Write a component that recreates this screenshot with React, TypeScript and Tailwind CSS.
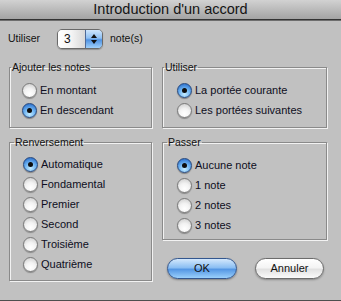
import React from "react";

function Radio({ checked }: { checked?: boolean }) {
  return (
    <span
      className={
        checked
          ? "w-[15px] h-[15px] shrink-0 rounded-full border border-[#27497e] flex items-center justify-center bg-[radial-gradient(circle_at_50%_78%,#c4ecff_0%,#6fb4f2_45%,#2f74cf_85%,#2a63b8_100%)] shadow-[0_1px_1px_rgba(0,0,0,0.35)]"
          : "w-[15px] h-[15px] shrink-0 rounded-full border border-[#7a7a7a] bg-[radial-gradient(circle_at_50%_75%,#ffffff_0%,#f2f2f2_45%,#d2d2d2_85%,#bdbdbd_100%)] shadow-[0_1px_1px_rgba(0,0,0,0.3)]"
      }
    >
      {checked && <span className="w-[5px] h-[5px] rounded-full bg-[#0d0d0d]" />}
    </span>
  );
}

function Row({ label, checked }: { label: string; checked?: boolean }) {
  return (
    <div className="h-[20px] flex items-center gap-[3px] text-[11px] text-[#0e0e22]">
      <Radio checked={checked} />
      <span>{label}</span>
    </div>
  );
}

function Group({
  title,
  children,
  className,
  inner,
  legendClass,
}: {
  title: string;
  children: React.ReactNode;
  className: string;
  inner: string;
  legendClass?: string;
}) {
  return (
    <fieldset
      className={
        "border border-[#8a8a8a] shadow-[inset_1px_1px_0_#f2f2f2,1px_1px_0_#f2f2f2] " +
        className
      }
    >
      <legend
        className={
          "px-[1px] text-[10.5px] leading-[12px] text-[#111] " + (legendClass ?? "ml-[1px]")
        }
      >
        {title}
      </legend>
      <div className={inner}>{children}</div>
    </fieldset>
  );
}

export default function App() {
  return (
    <div className="w-[341px] h-[301px] bg-[#c1c1c1] border-b border-[#4e4e4e] flex flex-col font-['Liberation_Sans',Arial,sans-serif] overflow-hidden">
      <div className="h-[19px] shrink-0 bg-gradient-to-b from-[#d2d2d2] to-[#a4a4a4] flex items-center justify-center text-[14.5px] text-[#151515] leading-none">
        Introduction d'un accord
      </div>
      <div className="h-[1px] shrink-0 bg-[#343434]" />
      <div className="h-[1px] shrink-0 bg-[#6e6e6e]" />

      <div className="mt-[8px] h-[20px] flex items-center pl-[8px] text-[10.5px] text-[#111]">
        <span className="w-[49px]">Utiliser</span>
        <div className="w-[46px] h-[20px] flex rounded-[5px] border border-[#6a6a6a] overflow-hidden shadow-[0_1px_1px_rgba(0,0,0,0.25)]">
          <div className="flex-1 bg-[linear-gradient(to_right,#ffffff_0%,#f4f4f4_50%,#d8d8d8_100%)] flex items-center pl-[6px] text-[12px] text-[#111]">
            3
          </div>
          <div className="w-[17px] border-l border-[#4e6a98] bg-[linear-gradient(to_bottom,#cfe6fd_0%,#8fc0f3_45%,#4f92e2_55%,#9fd0fb_100%)] flex flex-col items-center justify-center gap-[2px]">
            <svg width="6" height="4" viewBox="0 0 6 4">
              <path d="M3 0L6 4H0z" fill="#111" />
            </svg>
            <svg width="6" height="4" viewBox="0 0 6 4">
              <path d="M0 0H6L3 4z" fill="#111" />
            </svg>
          </div>
        </div>
        <span className="ml-[7px]">note(s)</span>
      </div>

      <div className="mt-[12px] flex gap-[10px] pl-[9px]">
        <Group
          title="Ajouter les notes"
          className="w-[143px]"
          inner="pl-[12px] pt-[7px] pb-[7px]"
          legendClass="ml-[1px]"
        >
          <Row label="En montant" />
          <Row label="En descendant" checked />
        </Group>
        <Group
          title="Utiliser"
          className="w-[165px]"
          inner="pl-[14px] pt-[7px] pb-[7px]"
          legendClass="ml-[1px]"
        >
          <Row label="La portée courante" checked />
          <Row label="Les portées suivantes" />
        </Group>
      </div>

      <div className="mt-[8px] flex gap-[10px] pl-[9px]">
        <Group
          title="Renversement"
          className="w-[143px] h-[145px]"
          inner="pl-[13px] pt-[6px]"
          legendClass="ml-[4px]"
        >
          <Row label="Automatique" checked />
          <Row label="Fondamental" />
          <Row label="Premier" />
          <Row label="Second" />
          <Row label="Troisième" />
          <Row label="Quatrième" />
        </Group>
        <div className="flex flex-col">
          <Group
            title="Passer"
            className="w-[165px] h-[104px]"
            inner="pl-[14px] pt-[7px]"
            legendClass="ml-[4px]"
          >
            <Row label="Aucune note" checked />
            <Row label="1 note" />
            <Row label="2 notes" />
            <Row label="3 notes" />
          </Group>
          <div className="mt-[18px] flex gap-[18px] pl-[5px]">
            <button className="w-[70px] h-[21px] rounded-full border border-[#33578f] bg-[linear-gradient(to_bottom,#d4e8fc_0%,#8cbff3_45%,#5597e4_55%,#9ad0fc_100%)] shadow-[0_1px_2px_rgba(0,0,0,0.35)] text-[11px] text-[#111] flex items-center justify-center">
              OK
            </button>
            <button className="w-[69px] h-[21px] rounded-full border border-[#6c6c6c] bg-[linear-gradient(to_bottom,#ffffff_0%,#f4f4f4_45%,#e2e2e2_55%,#fafafa_100%)] shadow-[0_1px_2px_rgba(0,0,0,0.3)] text-[11px] text-[#111] flex items-center justify-center">
              Annuler
            </button>
          </div>
        </div>
      </div>
    </div>
  );
}
